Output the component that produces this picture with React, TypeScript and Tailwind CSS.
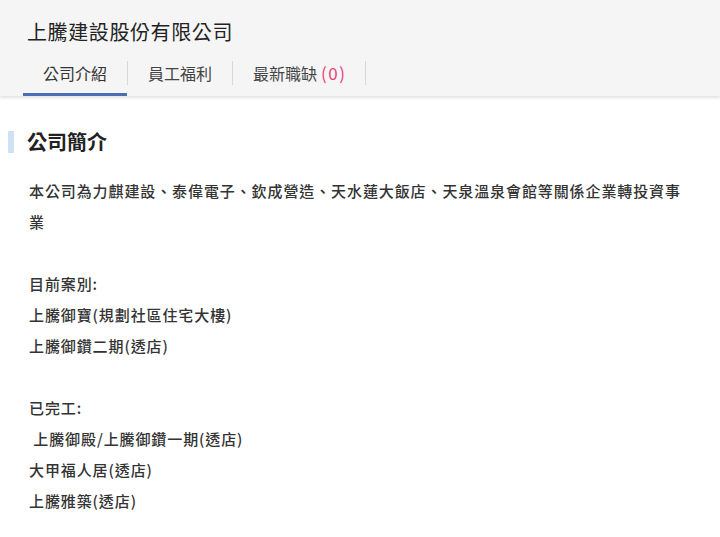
import React from "react";

const lines: string[] = [
  "本公司為力麒建設、泰偉電子、欽成營造、天水蓮大飯店、天泉溫泉會館等關係企業轉投資事業",
  "",
  "目前案別:",
  "上騰御寶(規劃社區住宅大樓)",
  "上騰御鑽二期(透店)",
  "",
  "已完工:",
  " 上騰御殿/上騰御鑽一期(透店)",
  "大甲福人居(透店)",
  "上騰雅築(透店)",
];

export default function App() {
  return (
    <div
      className="w-[720px] h-[537px] bg-white overflow-hidden"
      style={{ fontFamily: '"Noto Sans CJK TC", "Noto Sans", sans-serif' }}
    >
      <div className="bg-[#f5f5f5] shadow-[0_2px_3px_rgba(0,0,0,0.12)] relative">
        <div className="pl-[27px] pt-[18px] h-[50px] text-[20px] leading-[28px] tracking-[0.6px] text-[#222]">
          上騰建設股份有限公司
        </div>
        <div className="flex pl-[23px] h-[46px]">
          <div className="relative flex items-center px-5 text-[16px] text-[#333]">
            公司介紹
            <div className="absolute left-0 right-0 bottom-0 h-[3px] bg-[#4a6eb3]" />
          </div>
          <div className="w-px h-6 bg-[#d8d8d8] self-center" />
          <div className="flex items-center px-5 text-[16px] text-[#444]">員工福利</div>
          <div className="w-px h-6 bg-[#d8d8d8] self-center" />
          <div className="flex items-center pl-5 pr-[19px] text-[16px] text-[#444]">
            最新職缺<span className="ml-[4px] text-[17px] tracking-[1.5px] text-[#e8417a]">(0)</span>
          </div>
          <div className="w-px h-6 bg-[#d8d8d8] self-center" />
        </div>
      </div>
      <div className="flex items-center mt-[35px] h-[22px]">
        <div className="w-[6px] h-[22px] bg-[#cfe2f5] ml-[8px]" />
        <div className="ml-[13px] text-[20px] font-bold text-[#222] leading-[22px]">公司簡介</div>
      </div>
      <div className="pl-[29px] pr-[36px] mt-[22px] text-[15px] font-medium text-[#333] leading-[31px] tracking-[0.9px] whitespace-pre-wrap">
        {lines.map((l, i) => (
          <div key={i} className="min-h-[31px]">{l}</div>
        ))}
      </div>
    </div>
  );
}
